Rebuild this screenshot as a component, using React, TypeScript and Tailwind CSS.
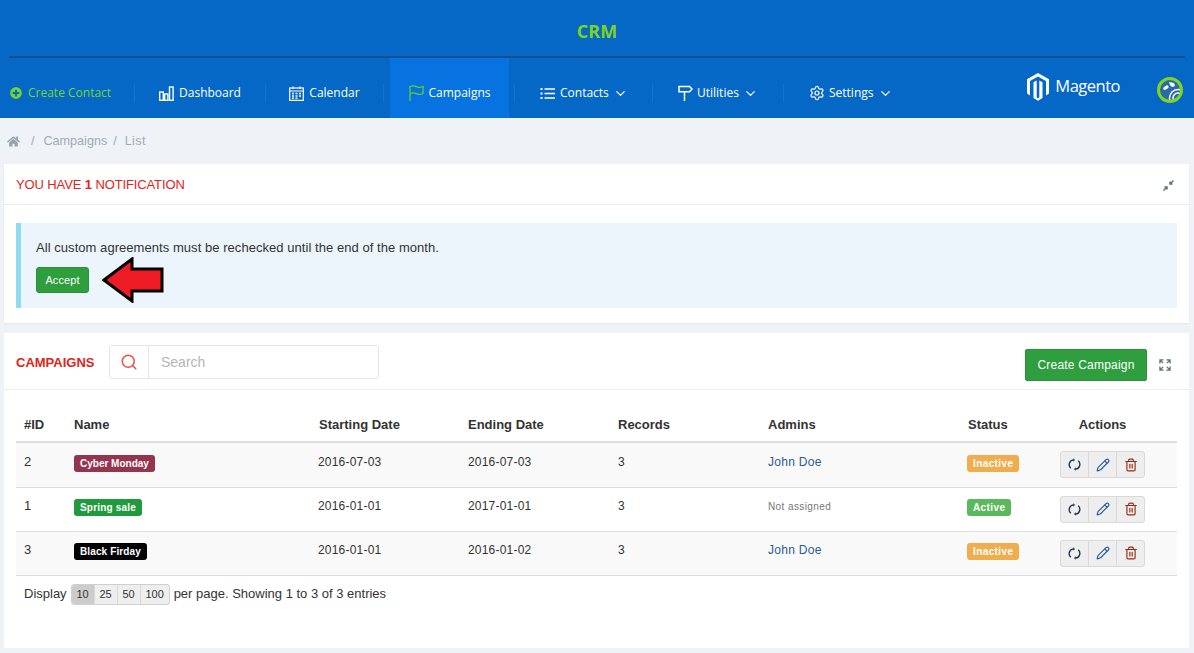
import React from "react";
import { ChevronDown, Pencil, Search, Settings, Trash2 } from "lucide-react";
import { FaHome, FaPlusCircle } from "react-icons/fa";

const DashIcon = () => (
  <svg width="15" height="15" viewBox="0 0 15 15" fill="none" stroke="currentColor" strokeWidth="1.4">
    <rect x="0.7" y="6" width="3.6" height="8.3" />
    <rect x="5.7" y="8" width="3.2" height="6.3" />
    <rect x="10.5" y="1" width="3.6" height="13.3" />
  </svg>
);

const CalIcon = () => (
  <svg width="15" height="15" viewBox="0 0 15 15" fill="none" stroke="currentColor" strokeWidth="1.2">
    <rect x="0.7" y="2" width="13.6" height="12.4" />
    <path d="M0.7 5H14.3M4 0.5V3M11 0.5V3" />
    <path d="M3 7.5H5M6.5 7.5H8.5M10 7.5H12M3 10H5M6.5 10H8.5M10 10H12M3 12.3H5M6.5 12.3H8.5" strokeWidth="1.5" />
  </svg>
);

const FlagIcon = () => (
  <svg width="15" height="16" viewBox="0 0 15 16" fill="none" stroke="#5fd02a" strokeWidth="1.3">
    <path d="M1 16V1" />
    <path d="M1 1.5C4 0.2 6 0.8 8 1.8 10 2.8 12 2.6 14 1.5V8.5C12 9.6 10 9.8 8 8.8 6 7.8 4 7.2 1 8.5" />
  </svg>
);

const ListIcon = () => (
  <svg width="15" height="15" viewBox="0 0 15 15" fill="none" stroke="currentColor" strokeWidth="1.4">
    <path d="M0.5 3H2.5M0.5 7.5H2.5M0.5 12H2.5" strokeWidth="2" />
    <path d="M4.5 3H15M4.5 7.5H15M4.5 12H15" />
  </svg>
);

const SignIcon = () => (
  <svg width="15" height="16" viewBox="0 0 15 16" fill="none" stroke="currentColor" strokeWidth="1.5">
    <path d="M1 1.5H11.5L14 4 11.5 6.8H1Z" />
    <path d="M6.5 7V16" />
  </svg>
);

const SyncIcon = () => (
  <svg width="13" height="13" viewBox="0 0 14 14" fill="none" stroke="#23384f" strokeWidth="1.5">
    <path d="M3 11A5.2 5.2 0 0 1 5.6 2" />
    <path d="M11 3A5.2 5.2 0 0 1 8.4 12" />
    <path d="M5.6 0.2 7.6 2.2 5.4 4" fill="#23384f" stroke="none" />
    <path d="M8.4 13.8 6.4 11.8 8.6 10" fill="#23384f" stroke="none" />
  </svg>
);

const navItems = [
  { label: "Dashboard", icon: <DashIcon />, w: "w-[130px]" },
  { label: "Calendar", icon: <CalIcon />, w: "w-[117px]" },
];

const navAfter = [
  { label: "Contacts", icon: <ListIcon />, w: "w-[137px]", gap: "gap-[5px]", chev: "ml-[-1px]" },
  { label: "Utilities", icon: <SignIcon />, w: "w-[130px]", gap: "gap-[4px]", chev: "ml-[0px]" },
  { label: "Settings", icon: <Settings size={16} strokeWidth={1.8} />, w: "w-[137px]", gap: "gap-[4px]", chev: "ml-[0px]" },
];

const rows = [
  { id: "2", name: "Cyber Monday", color: "bg-[#94344f]", start: "2016-07-03", end: "2016-07-03", admin: "John Doe", status: "Inactive", h: "h-[45px]", bg: "bg-[#f9f9f9]", pad: "pt-[10px]", badgePad: "pt-[11px]", spacing: "tracking-normal" },
  { id: "1", name: "Spring sale", color: "bg-[#1f9a3d]", start: "2016-01-01", end: "2017-01-01", admin: "", status: "Active", h: "h-[44px]", bg: "bg-white", pad: "pt-[9px]", badgePad: "pt-[10px]", spacing: "tracking-[0.2px]" },
  { id: "3", name: "Black Firday", color: "bg-black", start: "2016-01-01", end: "2016-01-02", admin: "John Doe", status: "Inactive", h: "h-[44px]", bg: "bg-[#f9f9f9]", pad: "pt-[9px]", badgePad: "pt-[10px]", spacing: "tracking-[0.12px]" },
];

const Divider = () => <span className="h-[18px] w-px bg-[#0f74d6]" />;

const App = () => {
  return (
    <div className="min-h-[653px] bg-[#eff3f8] font-['Liberation_Sans',sans-serif] text-[13px] text-[#333333]">
      <header className="bg-[#0568c6] h-[118px] font-['Open_Sans',sans-serif] text-[12px] text-white">
        <div className="mx-[9px] h-[58px] border-b-2 border-[#1c4f8a] flex items-center justify-center pt-[6px]">
          <span className="text-[18px] font-bold text-[#7ed321]">CRM</span>
        </div>
        <nav className="h-[60px] flex items-center">
          <div className="flex items-center pt-[10px] h-full">
            <a className="w-[134px] pl-[10px] flex items-center gap-[6px] text-[#74d62a]">
              <FaPlusCircle size={12} className="text-[#74d62a]" />
              Create Contact
            </a>
            <Divider />
          </div>
          {navItems.map((item) => (
            <div key={item.label} className="flex items-center h-full pt-[10px]">
              <a className={`${item.w} flex items-center justify-center gap-[5px]`}>
                {item.icon}
                {item.label}
              </a>
              {item.label === "Dashboard" && <Divider />}
            </div>
          ))}
          <div className="flex items-center h-full pt-[10px]">
            <Divider />
          </div>
          <a className="ml-[6px] w-[119px] h-[60px] pt-[10px] flex items-center justify-center gap-[5px] bg-[#0673e0]">
            <FlagIcon />
            Campaigns
          </a>
          <div className="ml-[5px] flex items-center h-full pt-[10px]">
            <Divider />
          </div>
          {navAfter.map((item) => (
            <div key={item.label} className="flex items-center h-full pt-[10px]">
              <a className={`${item.w} pl-[25px] flex items-center ${item.gap}`}>
                {item.icon}
                {item.label}
                <ChevronDown size={15} strokeWidth={2} className={item.chev} />
              </a>
              {item.label !== "Settings" && <Divider />}
            </div>
          ))}
          <div className="ml-auto flex items-center">
            <div className="flex items-center gap-[6px] mr-[37px] mb-[2px]">
              <svg width="22" height="28" viewBox="0 0 22 28" fill="white">
                <path d="M11 0 22 6.3V20.6L19 22.4V8L11 3.4 3 8V22.4L0 20.6V6.3Z" />
                <path d="M9.7 7.5V24.5L11 25.3 12.3 24.5V7.5L15.5 9.2V25L11 27.8 6.5 25V9.2Z" />
              </svg>
              <span className="font-['Open_Sans',sans-serif] text-[16.5px] tracking-[-0.5px] mt-[-1px]">Magento</span>
            </div>
            <div className="mr-[11px] mt-[4px] w-[26px] h-[26px] rounded-full border-[3px] border-[#7fd61b] bg-[#2a6aa8] overflow-hidden">
              <svg width="20" height="20" viewBox="0 0 20 20" fill="white">
                <path d="M3 8 7 5 9 7 7 9 4 10Z" />
                <path d="M9 2 14 3 15 6 12 7 10 5Z" />
                <g fill="none" stroke="white" strokeWidth="1.5">
                  <circle cx="18" cy="18" r="5" />
                  <circle cx="18" cy="18" r="8.5" />
                </g>
              </svg>
            </div>
          </div>
        </nav>
      </header>

      <div className="h-[46px] pt-[1px] pl-[7px] flex items-center text-[12.6px] text-[#9eabb3]">
        <FaHome size={13} className="text-[#94a3ab]" />
        <span className="ml-[11px]">/</span>
        <span className="ml-[9px]">Campaigns</span>
        <span className="ml-[6px]">/</span>
        <span className="ml-[8px] tracking-[0.4px]">List</span>
      </div>

      <section className="ml-[4px] mr-[5px] bg-white h-[159px] shadow-[0_1px_2px_rgba(0,0,0,0.05)]">
        <div className="h-[41px] px-[12px] flex items-center justify-between border-b border-[#eeeeee] text-[#e2231a]">
          <span className="mt-[2px] tracking-[-0.12px]">YOU HAVE <b className="font-bold">1</b> NOTIFICATION</span>
          <svg width="11" height="11" viewBox="0 0 11 11" fill="none" stroke="#60717f" strokeWidth="1.5" className="mr-[3px] mt-[3px]">
            <path d="M10.5 0.5 7 4M7 1.5V4H9.5" />
            <path d="M0.5 10.5 4 7M1.5 7H4V9.5" />
          </svg>
        </div>
        <div className="mt-[18px] mx-[12px] h-[85px] bg-[#edf5fc] border-l-[5px] border-[#8fdcec] pl-[15px] pt-[15px]">
          <p className="leading-[20px] tracking-[0.05px]">All custom agreements must be rechecked until the end of the month.</p>
          <div className="mt-[-1px] flex items-center">
            <button className="w-[53px] h-[26px] rounded-[3px] bg-[#2f9e3f] border border-[#2d8f3a] text-white text-[11px] tracking-[0.1px]">Accept</button>
            <svg width="62" height="46" viewBox="0 0 62 46" className="ml-[13px]">
              <path d="M2 23 30 2V12H60V34H30V44Z" fill="#ef1c25" stroke="black" strokeWidth="3" strokeLinejoin="miter" />
            </svg>
          </div>
        </div>
      </section>

      <section className="mt-[10px] ml-[4px] mr-[5px] bg-white h-[315px]">
        <div className="h-[57px] pl-[12px] pr-[18px] flex items-center border-b border-[#eeeeee]">
          <h2 className="w-[93px] font-bold text-[#e2231a] leading-none mt-[3px]">CAMPAIGNS</h2>
          <div className="flex h-[34px] w-[270px] border border-[#e5e5e5] rounded-[3px] mt-[1px]">
            <span className="w-[39px] border-r border-[#e5e5e5] flex items-center justify-center">
              <Search size={18} strokeWidth={2} className="text-[#e0544a]" />
            </span>
            <span className="pl-[12px] pt-[2px] flex items-center text-[14px] text-[#b5b5b5]">Search</span>
          </div>
          <button className="ml-auto w-[122px] h-[32px] mt-[8px] rounded-[2px] bg-[#2f9e3f] border border-[#2d8f3a] text-white text-[12px] tracking-[0.2px]">
            Create Campaign
          </button>
          <svg width="12" height="12" viewBox="0 0 13 13" fill="none" stroke="#60717f" strokeWidth="1.4" className="ml-[12px] mt-[7px]">
            <path d="M1 5V1H5M1 1 4.5 4.5" />
            <path d="M12 5V1H8M12 1 8.5 4.5" />
            <path d="M1 8V12H5M1 12 4.5 8.5" />
            <path d="M12 8V12H8M12 12 8.5 8.5" />
          </svg>
        </div>

        <div className="mx-[12px] mt-[14px]">
          <table className="w-full table-fixed border-collapse">
            <colgroup>
              <col className="w-[50px]" />
              <col className="w-[244px]" />
              <col className="w-[150px]" />
              <col className="w-[150px]" />
              <col className="w-[150px]" />
              <col className="w-[200px]" />
              <col className="w-[92px]" />
              <col />
            </colgroup>
            <thead>
              <tr className="h-[38px] border-b-2 border-[#dddddd] text-left font-bold text-[#333333]">
                <th className="pl-[8px] pt-[4px]">#ID</th>
                <th className="pl-[8px] pt-[4px]">Name</th>
                <th className="pl-[9px] pt-[4px]">Starting Date</th>
                <th className="pl-[8px] pt-[4px]">Ending Date</th>
                <th className="pl-[8px] pt-[4px]">Records</th>
                <th className="pl-[8px] pt-[4px]">Admins</th>
                <th className="pl-[8px] pt-[4px]">Status</th>
                <th className="pr-[24px] pt-[4px] text-center">Actions</th>
              </tr>
            </thead>
            <tbody className="text-[12px] tracking-[0.2px]">
              {rows.map((row) => (
                <tr key={row.id} className={`${row.h} ${row.bg} border-b border-[#dddddd] align-top`}>
                  <td className={`pl-[8px] ${row.pad} text-[13px] leading-[18px]`}>{row.id}</td>
                  <td className={`pl-[8px] ${row.badgePad}`}>
                    <span className={`inline-block h-[17px] px-[6px] rounded-[3px] ${row.color} text-white text-[10px] font-bold leading-[17px] ${row.spacing}`}>
                      {row.name}
                    </span>
                  </td>
                  <td className={`pl-[8px] ${row.pad} leading-[18px]`}>{row.start}</td>
                  <td className={`pl-[8px] ${row.pad} leading-[18px]`}>{row.end}</td>
                  <td className={`pl-[8px] ${row.pad} leading-[18px]`}>3</td>
                  <td className={`pl-[8px] ${row.pad} leading-[18px]`}>
                    {row.admin ? (
                      <span className="text-[#2b5a96] tracking-[0.3px]">{row.admin}</span>
                    ) : (
                      <span className="text-[10px] text-[#777777] tracking-[0.4px]">Not assigned</span>
                    )}
                  </td>
                  <td className={`pl-[7px] ${row.badgePad}`}>
                    <span className={`inline-block h-[17px] px-[6px] rounded-[3px] text-white text-[10px] font-bold leading-[17px] tracking-[0.4px] ${row.status === "Active" ? "bg-[#5cb85c]" : "bg-[#f0ad4e]"}`}>
                      {row.status}
                    </span>
                  </td>
                  <td className="pt-[8px]">
                    <div className="ml-[8px] flex w-[85px] h-[27px] rounded-[3px] border border-[#d9d9d9] bg-[#eeeeee] divide-x divide-[#d9d9d9]">
                      <span className="flex-1 flex items-center justify-center"><SyncIcon /></span>
                      <span className="flex-1 flex items-center justify-center"><Pencil size={14} strokeWidth={2} className="text-[#2e5f9e]" /></span>
                      <span className="flex-1 flex items-center justify-center"><Trash2 size={14} strokeWidth={2} className="text-[#9c2a10]" /></span>
                    </div>
                  </td>
                </tr>
              ))}
            </tbody>
          </table>
          <div className="mt-[8px] pl-[8px] flex items-center text-[13px]">
            <span>Display</span>
            <div className="ml-[4px] flex h-[21px] rounded-[3px] border border-[#d0d0d0] bg-[#eeeeee] text-[11px] divide-x divide-[#d9d9d9]">
              <span className="w-[23px] flex items-center justify-center bg-[#cccccc] rounded-l-[3px]">10</span>
              <span className="w-[23px] flex items-center justify-center">25</span>
              <span className="w-[23px] flex items-center justify-center">50</span>
              <span className="w-[28px] flex items-center justify-center">100</span>
            </div>
            <span className="ml-[4px]">per page. Showing 1 to 3 of 3 entries</span>
          </div>
        </div>
      </section>
    </div>
  );
};

export default App;
